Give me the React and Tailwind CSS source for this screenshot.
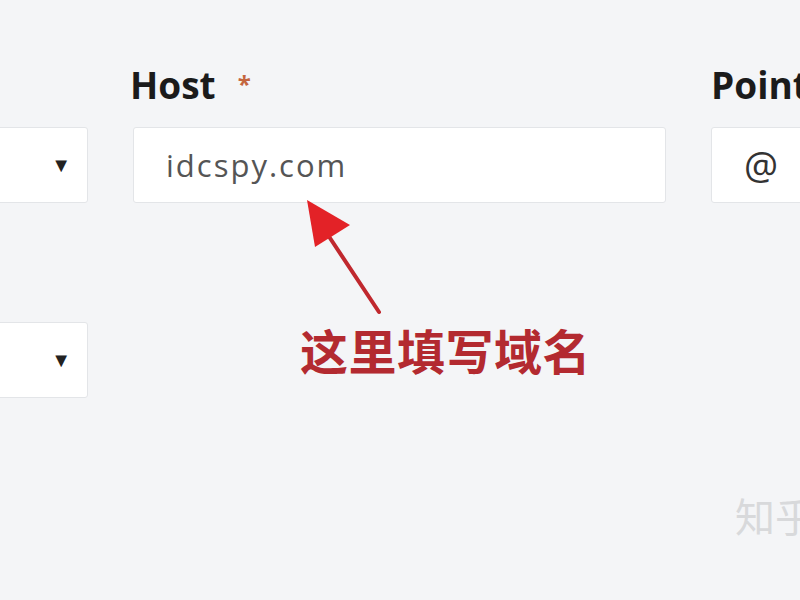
import React from 'react';

const Caret = () => (
  <span className="text-[20px] leading-none text-[#222]">▼</span>
);

export default function App() {
  return (
    <div className="relative h-[600px] w-[800px] overflow-hidden bg-[#f4f5f7] font-['Open_Sans',sans-serif]">
      <div className="flex ml-[-100px] pt-[66px] gap-[45px]">
        {/* type / ttl selects */}
        <div className="flex w-[188px] shrink-0 flex-col pt-[61px]">
          <div className="flex h-[76px] items-center justify-end rounded-[3px] border border-[#e3e5e8] bg-white pr-[16px]">
            <Caret />
          </div>
          <div className="mt-[119px] flex h-[76px] items-center justify-end rounded-[3px] border border-[#e3e5e8] bg-white pr-[16px]">
            <Caret />
          </div>
        </div>

        {/* host */}
        <div className="flex w-[533px] shrink-0 flex-col">
          <div className="ml-[-3px] flex h-[61px] items-start gap-[22px]">
            <span className="text-[37px] font-bold leading-none text-[#1b1b1b]">Host</span>
            <span className="mt-[6px] text-[24px] font-bold leading-none text-[#c4663f]">*</span>
          </div>
          <div className="flex h-[76px] items-center rounded-[3px] border border-[#e3e5e8] bg-white pl-[32px]">
            <span className="text-[31px] tracking-[2px] text-[#555]">idcspy.com</span>
          </div>
          <div className="ml-[167px] h-[180px]">
            <svg width="90" height="120" viewBox="0 0 90 120" className="ml-[4px] mt-[-4px] block">
              <line x1="75" y1="113" x2="20" y2="30" stroke="#c0282e" strokeWidth="4" strokeLinecap="round" />
              <polygon points="3,1 46,26 11,48" fill="#e32227" />
            </svg>
            <div className="mt-[6px] whitespace-nowrap text-[48px] font-bold leading-none tracking-[0.5px] text-[#b32a30] font-['Noto_Sans_CJK_SC',sans-serif]">
              这里填写域名
            </div>
          </div>
        </div>

        {/* points to */}
        <div className="flex w-[300px] shrink-0 flex-col">
          <div className="flex h-[61px] items-start">
            <span className="whitespace-nowrap text-[37px] font-bold leading-none text-[#1b1b1b]">Points to</span>
          </div>
          <div className="flex h-[76px] items-center rounded-[3px] border border-[#e3e5e8] bg-white pl-[32px]">
            <span className="text-[38px] leading-none text-[#333]">@</span>
          </div>
        </div>
      </div>

      {/* watermark */}
      <div className="absolute left-[735px] top-[495px] whitespace-nowrap text-[40px] leading-none text-[#d8d9db] font-['Noto_Sans_CJK_SC',sans-serif]">
        知乎
      </div>
    </div>
  );
}
